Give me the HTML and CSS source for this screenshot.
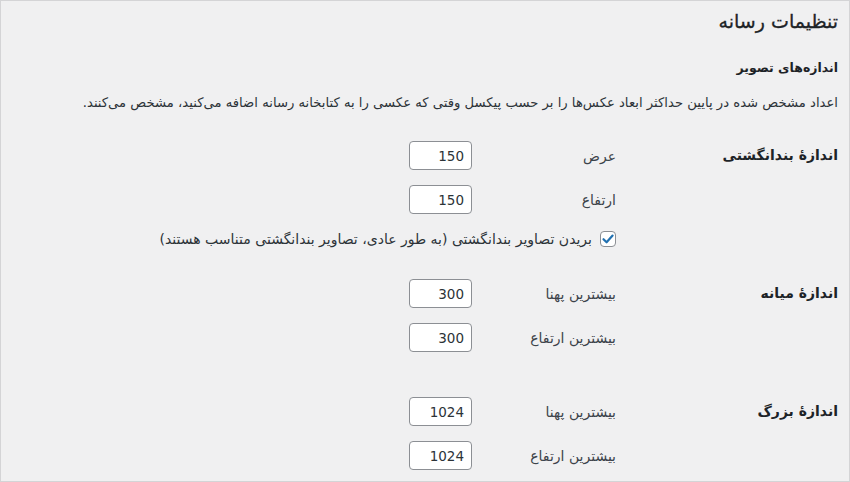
FILE: index.html
```html
<!DOCTYPE html>
<html lang="fa" dir="rtl">
<head>
    <meta charset="UTF-8">
    <title>تنظیمات رسانه</title>
    <link rel="stylesheet" href="styles.css">
</head>
<body>
    <div class="wrap">
        <h1>تنظیمات رسانه</h1>
        <h2>اندازه‌های تصویر</h2>
        <p class="desc">اعداد مشخص شده در پایین حداکثر ابعاد عکس‌ها را بر حسب پیکسل وقتی که عکسی را به کتابخانه رسانه اضافه می‌کنید، مشخص می‌کنند.</p>

        <div class="section thumb">
            <div class="th">اندازهٔ بندانگشتی</div>
            <div class="fields">
                <div class="field">
                    <label for="tw">عرض</label>
                    <input id="tw" type="text" value="150">
                </div>
                <div class="field">
                    <label for="th">ارتفاع</label>
                    <input id="th" type="text" value="150">
                </div>
                <div class="check">
                    <span class="box">
                        <svg width="14" height="14" viewBox="0 0 14 14"><path d="M2.5 7.2 L5.6 10.3 L11.6 3.6" fill="none" stroke="#2271b1" stroke-width="2.2" stroke-linecap="round" stroke-linejoin="round"/></svg>
                    </span>
                    <span>بریدن تصاویر بندانگشتی (به طور عادی، تصاویر بندانگشتی متناسب هستند)</span>
                </div>
            </div>
        </div>

        <div class="section medium">
            <div class="th">اندازهٔ میانه</div>
            <div class="fields">
                <div class="field">
                    <label for="mw">بیشترین پهنا</label>
                    <input id="mw" type="text" value="300">
                </div>
                <div class="field">
                    <label for="mh">بیشترین ارتفاع</label>
                    <input id="mh" type="text" value="300">
                </div>
            </div>
        </div>

        <div class="section large">
            <div class="th">اندازهٔ بزرگ</div>
            <div class="fields">
                <div class="field">
                    <label for="lw">بیشترین پهنا</label>
                    <input id="lw" type="text" value="1024">
                </div>
                <div class="field">
                    <label for="lh">بیشترین ارتفاع</label>
                    <input id="lh" type="text" value="1024">
                </div>
            </div>
        </div>
    </div>
</body>
</html>
```

FILE: styles.css
```css
html, body {
    margin: 0;
    height: 100%;
}
body {
    background: #f0f0f1;
    color: #1d2327;
    font-family: Tahoma, "DejaVu Sans", sans-serif;
    box-sizing: border-box;
    border: 1px solid #d4d4d6;
    overflow: hidden;
}
.wrap {
    padding: 0 11px 0 12px;
}
h1 {
    font-size: 19px;
    font-weight: normal;
    margin: 0;
    padding-top: 6px;
    line-height: 28px;
    -webkit-text-stroke: 0.3px #1d2327;
}
h2 {
    font-size: 12.5px;
    font-weight: bold;
    margin: 23px 0 0;
    line-height: 20px;
}
.desc {
    font-size: 13.2px;
    color: #2c3338;
    margin: 15px 0 0;
    line-height: 20px;
}
.section {
    display: flex;
    margin-top: 28px;
}
.section.medium {
    margin-top: 30px;
}
.section.large {
    margin-top: 45px;
}
.th {
    width: 222px;
    flex-shrink: 0;
    font-size: 14px;
    font-weight: bold;
    line-height: 29px;
}
.fields {
    flex: 1;
}
.field {
    display: flex;
    align-items: center;
    margin-bottom: 15px;
}
.field label {
    width: 144px;
    font-size: 14px;
    color: #3c434a;
}
.field input {
    width: 63px;
    height: 29px;
    box-sizing: border-box;
    border: 1px solid #8c8f94;
    border-radius: 4px;
    background: #fff;
    font-family: Tahoma, "DejaVu Sans", sans-serif;
    font-size: 13.5px;
    color: #2c3338;
    text-align: right;
    padding: 0 7px;
}
.section.medium .field:last-child,
.section.large .field:last-child {
    margin-bottom: 0;
}
.check {
    display: flex;
    align-items: center;
    gap: 8px;
    font-size: 14px;
    color: #2c3338;
    height: 20px;
}
.box {
    width: 16px;
    height: 16px;
    box-sizing: border-box;
    border: 1px solid #8c8f94;
    border-radius: 4px;
    background: #fff;
    display: flex;
    align-items: center;
    justify-content: center;
}
```
